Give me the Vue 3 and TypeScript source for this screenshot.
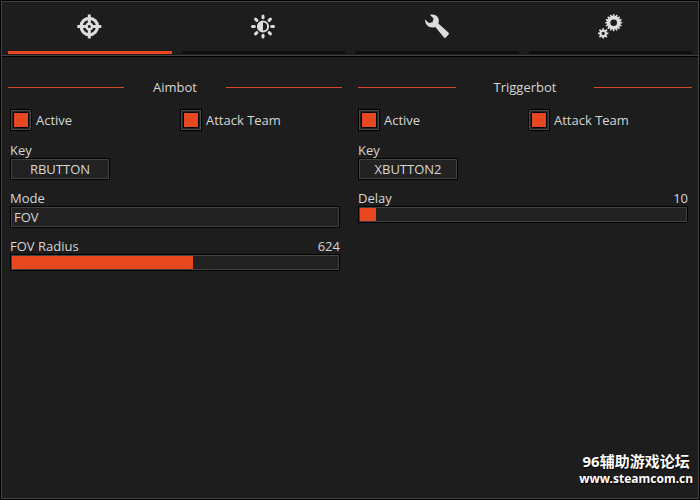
<script setup lang="ts">
import { ref } from 'vue'

type TabId = 'aim' | 'visuals' | 'misc' | 'settings'

const tabs: { id: TabId; label: string }[] = [
  { id: 'aim', label: 'Aim' },
  { id: 'visuals', label: 'Visuals' },
  { id: 'misc', label: 'Misc' },
  { id: 'settings', label: 'Settings' },
]

const activeTab = ref<TabId>('aim')

const aimActive = ref(true)
const aimTeam = ref(true)
const aimKey = ref('RBUTTON')
const aimMode = ref('FOV')
const fovRadius = ref(624)
const fovMax = 1125

const triggerActive = ref(true)
const triggerTeam = ref(true)
const triggerKey = ref('XBUTTON2')
const delay = ref(10)
const delayMax = 200

function fill(value: number, max: number): string {
  return `${(value / max) * 100}%`
}

// Closed outline of a gear with square teeth and a round hole.
function gear(cx: number, cy: number, outer: number, inner: number, hole: number, teeth: number): string {
  const step = (Math.PI * 2) / teeth
  const points: string[] = []
  for (let i = 0; i < teeth; i++) {
    const base = i * step - Math.PI / 2
    const corners: [number, number][] = [
      [inner, -0.32],
      [outer, -0.22],
      [outer, 0.22],
      [inner, 0.32],
    ]
    for (const [r, t] of corners) {
      const a = base + t * step
      points.push(`${(cx + r * Math.cos(a)).toFixed(2)} ${(cy + r * Math.sin(a)).toFixed(2)}`)
    }
  }
  const ring = `M${cx - hole} ${cy}a${hole} ${hole} 0 1 0 ${hole * 2} 0a${hole} ${hole} 0 1 0 ${-hole * 2} 0Z`
  return `M${points.join('L')}Z${ring}`
}

const bigGear = gear(15.7, 8.7, 8.5, 6.9, 3.3, 16)
const smallGear = gear(5.2, 19.4, 5.3, 3.8, 1.6, 8)
const rays = [0, 45, 90, 135, 180, 225, 270, 315]
</script>

<template>
  <div class="window">
    <nav class="tabs">
      <button
        v-for="tab in tabs"
        :key="tab.id"
        type="button"
        class="tab"
        :class="{ active: tab.id === activeTab }"
        :aria-label="tab.label"
        @click="activeTab = tab.id"
      >
        <svg v-if="tab.id === 'aim'" class="icon" viewBox="0 0 24 24" aria-hidden="true">
          <g fill="none" stroke="currentColor">
            <circle cx="11.3" cy="12.5" r="8.2" stroke-width="3.2" />
            <circle cx="11.3" cy="12.5" r="2.7" stroke-width="2.4" />
            <path d="M11.3.5v10M11.3 14.5v10M-.7 12.5h10M13.3 12.5h10" stroke-width="3" />
          </g>
        </svg>
        <svg v-else-if="tab.id === 'visuals'" class="icon" viewBox="0 0 24 24" aria-hidden="true">
          <circle cx="12" cy="12.5" r="5.1" fill="none" stroke="currentColor" stroke-width="2" />
          <path d="M12 7.5a5 5 0 0 0 0 10Z" fill="currentColor" />
          <path
            v-for="angle in rays"
            :key="angle"
            d="M12 2v1.8"
            :transform="`rotate(${angle} 12 12.5)`"
            stroke="currentColor"
            stroke-width="3"
            stroke-linecap="round"
          />
        </svg>
        <svg v-else-if="tab.id === 'misc'" class="icon" viewBox="0 0 24 24" aria-hidden="true">
          <path
            d="M5 .9C9.5-1 14.4 2.6 13.8 7.4L13.4 9.6L23.4 18.6Q24.4 19.6 23.6 20.6L20.8 23.6Q20 24.3 19 23.4L10.4 13C5.5 15-.6 11.5.2 5.6L3.8 8.9L7.5 8.2L8.6 4.5Z"
            fill="currentColor"
          />
        </svg>
        <svg v-else class="icon" viewBox="0 0 24 24" aria-hidden="true">
          <path :d="bigGear" fill="currentColor" fill-rule="evenodd" />
          <path :d="smallGear" fill="currentColor" fill-rule="evenodd" />
        </svg>
      </button>
    </nav>

    <main class="panels">
      <section class="panel inset">
        <h2 class="title">Aimbot</h2>
        <div class="fields">
          <div class="checks">
            <label class="check"><input v-model="aimActive" type="checkbox" />Active</label>
            <label class="check"><input v-model="aimTeam" type="checkbox" />Attack Team</label>
          </div>
          <div class="field">
            <label for="aim-key">Key</label>
            <button id="aim-key" type="button" class="key">{{ aimKey }}</button>
          </div>
          <div class="field">
            <label for="aim-mode">Mode</label>
            <select id="aim-mode" v-model="aimMode" class="select">
              <option>FOV</option>
            </select>
          </div>
          <div class="field">
            <div class="caption">
              <label for="fov-radius">FOV Radius</label>
              <output for="fov-radius">{{ fovRadius }}</output>
            </div>
            <input
              id="fov-radius"
              v-model.number="fovRadius"
              type="range"
              class="slider"
              min="0"
              :max="fovMax"
              :style="{ '--fill': fill(fovRadius, fovMax) }"
            />
          </div>
        </div>
      </section>

      <section class="panel">
        <h2 class="title wide">Triggerbot</h2>
        <div class="fields">
          <div class="checks">
            <label class="check"><input v-model="triggerActive" type="checkbox" />Active</label>
            <label class="check"><input v-model="triggerTeam" type="checkbox" />Attack Team</label>
          </div>
          <div class="field">
            <label for="trigger-key">Key</label>
            <button id="trigger-key" type="button" class="key">{{ triggerKey }}</button>
          </div>
          <div class="field">
            <div class="caption">
              <label for="delay">Delay</label>
              <output for="delay">{{ delay }}</output>
            </div>
            <input
              id="delay"
              v-model.number="delay"
              type="range"
              class="slider"
              min="0"
              :max="delayMax"
              :style="{ '--fill': fill(delay, delayMax) }"
            />
          </div>
        </div>
      </section>
    </main>

    <div class="watermark">
      <span class="forum">96辅助游戏论坛</span>
      <span>www.steamcom.cn</span>
    </div>
  </div>
</template>

<style>
body {
  margin: 0;
  background: #1d1d1d;
}
</style>

<style scoped>
.window {
  --accent: #e84820;
  --edge: #424242;
  position: relative;
  box-sizing: border-box;
  min-height: 100vh;
  padding: 1px;
  border: 1px solid #000;
  box-shadow: inset 0 0 0 1px var(--edge);
  background: #1d1d1d;
  color: #d6d6d6;
  font: 13px/16px "Open Sans", "Noto Sans", sans-serif;
}

.window *,
.window *::before,
.window *::after {
  box-sizing: border-box;
}

.tabs {
  display: grid;
  grid-template-columns: repeat(4, 1fr);
  gap: 10px;
  padding: 0 6px 1px;
  border-bottom: 1px solid var(--edge);
  box-shadow: 0 1px 0 #000;
}

.tab {
  display: flex;
  justify-content: center;
  align-items: flex-start;
  height: 52px;
  padding: 12px 0 0;
  border: 0;
  border-bottom: 3px solid #0f0f0f;
  background: none;
  color: #dcdcdc;
}

.tab.active {
  border-bottom-color: var(--accent);
}

.icon {
  display: block;
  width: 24px;
  height: 24px;
  overflow: visible;
}

.panels {
  display: grid;
  grid-template-columns: 1fr 1fr;
  gap: 16px;
  padding: 23px 6px;
}

.title {
  display: flex;
  align-items: center;
  gap: 29px;
  margin: 0 0 14px;
  font: inherit;
}

.title.wide {
  gap: 38px;
}

.title::before,
.title::after {
  content: "";
  flex: 1;
  height: 1px;
  background: #d4492b;
}

.fields {
  display: flex;
  flex-direction: column;
  gap: 10px;
  padding-right: 4px;
}

.inset .fields {
  padding: 0 2px;
}

.checks {
  display: grid;
  grid-template-columns: 170px 1fr;
  padding-bottom: 1px;
}

.check {
  display: flex;
  align-items: center;
  gap: 4px;
}

.check input {
  appearance: none;
  width: 22px;
  height: 22px;
  margin: 0;
  padding: 3px;
  border: 1px solid #000;
  box-shadow: inset 0 0 0 1px #4a4a4a, inset 0 0 0 2px #222, inset 0 0 0 3px #000;
  background: #222;
}

.check input:checked {
  background: linear-gradient(var(--accent), var(--accent)) content-box, #222;
}

.field {
  display: flex;
  flex-direction: column;
}

.caption {
  display: flex;
  justify-content: space-between;
}

.key,
.select,
.slider {
  margin: 0;
  border: 1px solid #000;
  border-radius: 0;
  box-shadow: inset 0 0 0 1px var(--edge);
  background: #222;
  color: inherit;
  font: inherit;
}

.key {
  width: 100px;
  height: 22px;
  padding: 0;
}

.select {
  appearance: none;
  width: 100%;
  height: 22px;
  padding: 0 3px;
}

.slider {
  appearance: none;
  width: 100%;
  height: 17px;
  padding: 1px;
  background: linear-gradient(90deg, var(--accent) var(--fill), #222 var(--fill)) content-box;
}

.slider::-webkit-slider-thumb {
  appearance: none;
  width: 1px;
  height: 13px;
  background: transparent;
}

.watermark {
  position: absolute;
  right: 6px;
  bottom: 12px;
  display: flex;
  flex-direction: column;
  align-items: center;
  color: #fff;
  font: bold 12px/17px "Noto Sans", "Noto Sans CJK SC", sans-serif;
  text-shadow: 1px 1px 1px #000;
}

.forum {
  font-size: 15px;
}
</style>
